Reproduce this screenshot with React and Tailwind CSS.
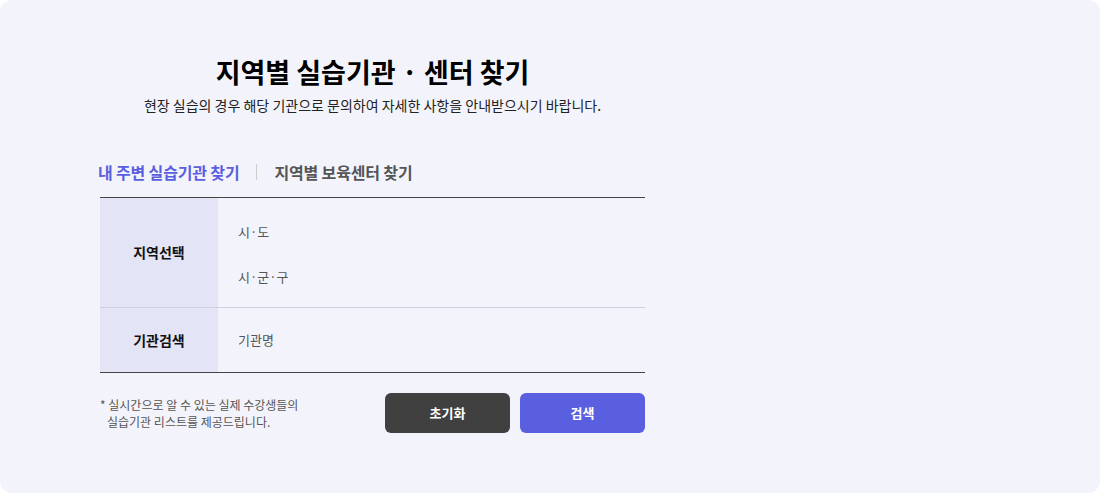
import React from "react";

export default function App() {
  return (
    <div className="w-[1100px] h-[493px] bg-white" style={{ fontFamily: '"Noto Sans CJK KR", "Noto Sans", sans-serif' }}>
      <div className="w-[1100px] h-[493px] rounded-[12px] bg-[#f3f4fb] flex flex-col">
        <div className="w-[545px] ml-[100px] flex flex-col">
          <h1 className="mt-[52px] text-center text-[27px] leading-[40px] font-bold text-black">
            지역별 실습기관 · 센터 찾기
          </h1>
          <p className="mt-[3px] text-center text-[14px] leading-[20px] text-[#222]">
            현장 실습의 경우 해당 기관으로 문의하여 자세한 사항을 안내받으시기 바랍니다.
          </p>
          <div className="mt-[45px] flex items-center -ml-[2px] text-[16px] font-bold tracking-[-0.01em] leading-[24px]">
            <span className="text-[#5a5fe0]">내 주변 실습기관 찾기</span>
            <span className="mx-[17px] w-px h-[16px] bg-[#ccc]" />
            <span className="text-[#555]">지역별 보육센터 찾기</span>
          </div>
          <div className="mt-[13px] border-t border-b border-[#444]">
            <div className="flex h-[110px] border-b border-[#cfcfdf]">
              <div className="w-[118px] bg-[#e3e4f5] flex items-center justify-center text-[14px] font-bold text-[#111]">
                지역선택
              </div>
              <div className="flex flex-col pl-[20px] pt-[24px] gap-[25px] text-[13px] leading-[20px] text-[#555]">
                <span>시·도</span>
                <span>시·군·구</span>
              </div>
            </div>
            <div className="flex h-[64px]">
              <div className="w-[118px] bg-[#e3e4f5] flex items-center justify-center text-[14px] font-bold text-[#111]">
                기관검색
              </div>
              <div className="flex items-center pl-[20px] text-[13px] text-[#555]">
                <span>기관명</span>
              </div>
            </div>
          </div>
          <div className="mt-[20px] flex justify-between">
            <p className="pt-[3px] text-[12px] leading-[17px] text-[#555]">
              * 실시간으로 알 수 있는 실제 수강생들의
              <br />
              <span className="pl-[7px]">실습기관 리스트를 제공드립니다.</span>
            </p>
            <div className="flex gap-[10px]">
              <button className="w-[125px] h-[40px] rounded-[6px] bg-[#404040] text-white text-[13px] font-bold">
                초기화
              </button>
              <button className="w-[125px] h-[40px] rounded-[6px] bg-[#5a5fe0] text-white text-[13px] font-bold">
                검색
              </button>
            </div>
          </div>
        </div>
      </div>
    </div>
  );
}
